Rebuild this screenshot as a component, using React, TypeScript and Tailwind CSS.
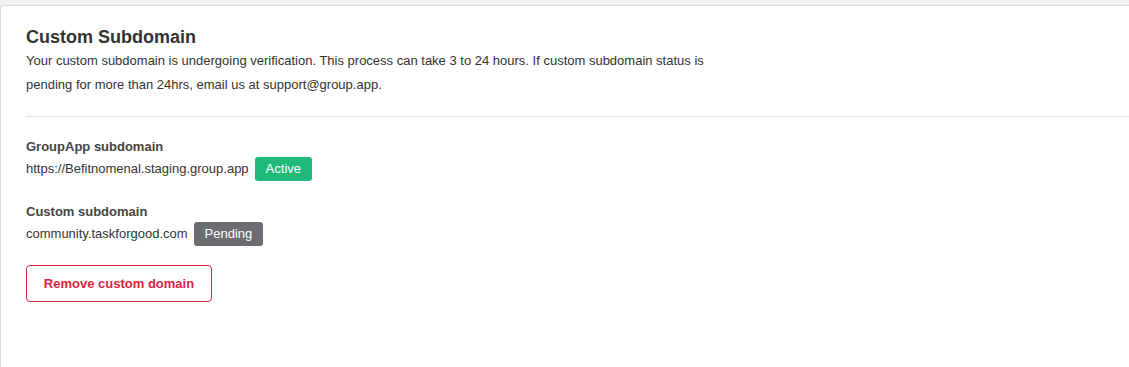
import React from "react";

export default function App() {
  return (
    <div
      className="w-[1129px] h-[367px] bg-[#eef0f2] pt-[5px] overflow-hidden text-[#333333]"
      style={{ fontFamily: '"Liberation Sans", Arial, sans-serif' }}
    >
      <div className="h-full bg-white border-l border-t border-[#d5d8dd] rounded-tl-[4px]">
        <div className="pl-[25px] pt-[20px]">
          <h1 className="text-[18px] leading-[22px] font-bold text-[#333333]">Custom Subdomain</h1>
          <p className="text-[13px] leading-[24px] w-[690px] mt-[1px]">
            Your custom subdomain is undergoing verification. This process can take 3 to 24 hours. If custom
            subdomain status is pending for more than 24hrs, email us at support@group.app.
          </p>
          <div className="mt-[19px] border-t border-[#dfe1e5]" />
          <div className="pt-[21px]">
            <div className="text-[13px] leading-[18px] font-bold text-[#444444]">GroupApp subdomain</div>
            <div className="flex items-center gap-[6px] mt-[1px] text-[13px]">
              <span>https://Befitnomenal.staging.group.app</span>
              <span className="bg-[#21b97a] text-white rounded-[3px] h-[24px] px-[11px] flex items-center text-[13px]">
                Active
              </span>
            </div>
          </div>
          <div className="pt-[22px]">
            <div className="text-[13px] leading-[18px] font-bold text-[#444444]">Custom subdomain</div>
            <div className="flex items-center gap-[6px] mt-[1px] text-[13px]">
              <span>community.taskforgood.com</span>
              <span className="bg-[#6c6d70] text-white rounded-[3px] h-[24px] px-[11px] flex items-center text-[13px]">
                Pending
              </span>
            </div>
          </div>
          <button className="mt-[19px] w-[186px] h-[37px] border border-[#dc2343] rounded-[4px] text-[#dc2343] text-[13px] font-bold bg-white">
            Remove custom domain
          </button>
        </div>
      </div>
    </div>
  );
}
